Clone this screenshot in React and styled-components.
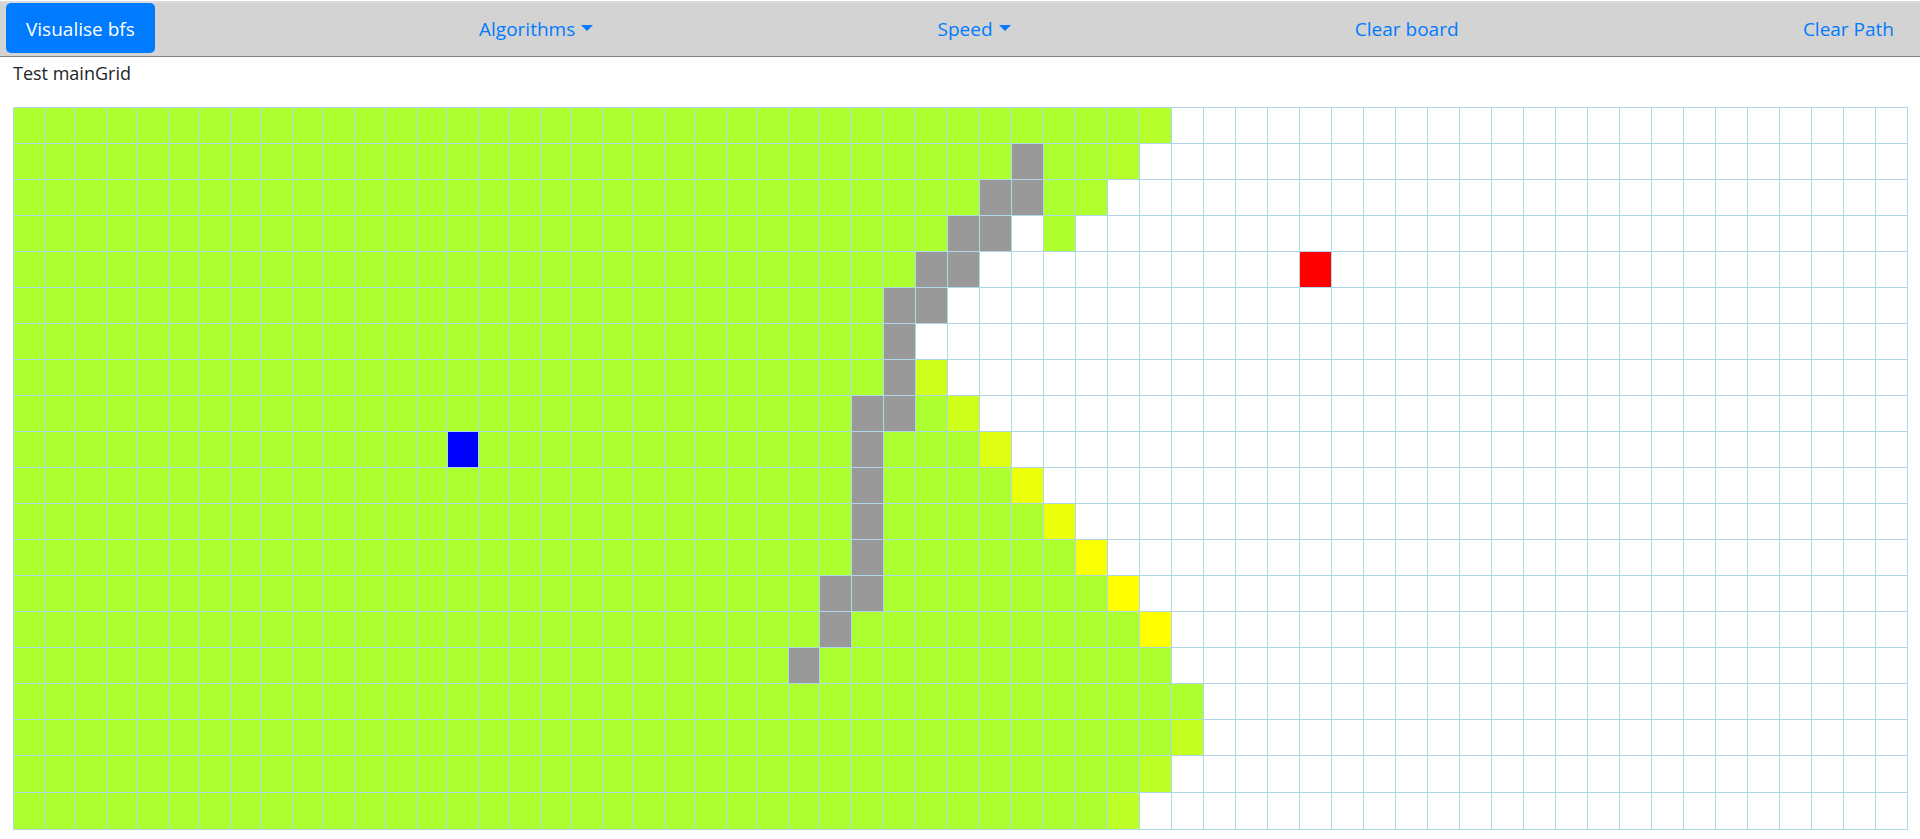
import React from 'react';
import styled, { createGlobalStyle } from 'styled-components';

const GlobalStyle = createGlobalStyle`
  *, *::before, *::after { box-sizing: border-box; }
  body {
    margin: 0;
    background: #fff;
    color: #212529;
    font-family: 'Segoe UI', 'Open Sans', 'Noto Sans', sans-serif;
    font-size: 18px;
    line-height: 30px;
  }
`;

const Page = styled.div`
  padding-top: 1px;
`;

const Toolbar = styled.nav`
  display: flex;
  justify-content: space-between;
  height: 56px;
  padding: 0 6px 3px;
  border-top: 2px solid #dadae0;
  border-bottom: 1px solid #808080;
  background: #d3d3d3;
`;

const ToolButton = styled.button`
  display: flex;
  align-items: center;
  gap: 6px;
  height: 50px;
  padding: 2px 20px 0;
  border: 0;
  border-radius: 5px;
  background: ${({ $primary }) => ($primary ? '#007bff' : 'transparent')};
  color: ${({ $primary }) => ($primary ? '#fff' : '#007bff')};
  font: inherit;
  font-size: 19px;
  cursor: pointer;
`;

const Caret = styled.span`
  border-top: 6px solid currentColor;
  border-right: 6px solid transparent;
  border-left: 6px solid transparent;
  margin-bottom: 2px;
`;

const Main = styled.main`
  padding: 1px 12px 0 13px;
`;

const Caption = styled.p`
  margin: 0 0 19px;
`;

const Board = styled.table`
  width: 100%;
  height: calc(100vh - 116px);
  border-collapse: collapse;
  table-layout: fixed;
`;

const NarrowColumn = styled.col`
  width: 31px;
`;

const BoardRow = styled.tr`
  height: ${({ $flexible }) => ($flexible ? 'auto' : '36px')};
`;

const Cell = styled.td`
  padding: 0;
  border: 1px solid lightblue;
  background: ${({ $fill }) => $fill};
`;

const GREEN = '#adff2f';
const WALL = '#999999';
const COLUMNS = 60;
// The remaining columns and rows share whatever space the window leaves.
const NARROW_COLUMNS = 26;
const FIXED_ROWS = 18;

// For each row: last visited column, wall columns, unvisited gaps and
// the colour of cells that are still fading in.
const ROWS = [
  { last: 36, fading: { 36: '#b7ff2a' } },
  { last: 35, walls: [32], fading: { 35: '#b4ff2b' } },
  { last: 34, walls: [31, 32], fading: { 34: '#b1ff2d' } },
  { last: 33, walls: [30, 31], gaps: [32], fading: { 33: '#afff2e' } },
  { last: 28, walls: [29, 30] },
  { last: 27, walls: [28, 29] },
  { last: 27, walls: [28] },
  { last: 29, walls: [28], fading: { 29: '#d0ff1c' } },
  { last: 30, walls: [27, 28], fading: { 30: '#d0ff1c' } },
  { last: 31, walls: [27], fading: { 31: '#deff13' } },
  { last: 32, walls: [27], fading: { 32: '#ecff0b' } },
  { last: 33, walls: [27], fading: { 33: '#ecff0b' } },
  { last: 34, walls: [27], fading: { 34: '#faff03' } },
  { last: 35, walls: [26, 27], fading: { 35: '#ffff00' } },
  { last: 36, walls: [26], fading: { 36: '#ffff00' } },
  { last: 36, walls: [25] },
  { last: 37 },
  { last: 37, fading: { 37: '#c4ff22' } },
  { last: 36, fading: { 36: '#bdff27' } },
  { last: 35, fading: { 35: '#bdff27' } },
];

const START = { row: 9, column: 14 };
const TARGET = { row: 4, column: 41 };

const isAt = (node, row, column) => node.row === row && node.column === column;

function fillFor(row, column) {
  const { last, walls = [], gaps = [], fading = {} } = ROWS[row];
  if (isAt(START, row, column)) return '#0000ff';
  if (isAt(TARGET, row, column)) return '#ff0000';
  if (walls.includes(column)) return WALL;
  if (fading[column]) return fading[column];
  return column <= last && !gaps.includes(column) ? GREEN : '#ffffff';
}

export default function App() {
  return (
    <Page>
      <GlobalStyle />
      <Toolbar>
        <ToolButton type="button" $primary>Visualise bfs</ToolButton>
        <ToolButton type="button" aria-haspopup="menu">Algorithms<Caret /></ToolButton>
        <ToolButton type="button" aria-haspopup="menu">Speed<Caret /></ToolButton>
        <ToolButton type="button">Clear board</ToolButton>
        <ToolButton type="button">Clear Path</ToolButton>
      </Toolbar>
      <Main>
        <Caption id="board-title">Test mainGrid</Caption>
        <Board aria-labelledby="board-title">
          <colgroup>
            <NarrowColumn span={NARROW_COLUMNS} />
            <col span={COLUMNS - NARROW_COLUMNS} />
          </colgroup>
          <tbody>
            {ROWS.map((_, row) => (
              <BoardRow key={row} $flexible={row >= FIXED_ROWS}>
                {Array.from({ length: COLUMNS }, (__, column) => (
                  <Cell key={column} $fill={fillFor(row, column)} />
                ))}
              </BoardRow>
            ))}
          </tbody>
        </Board>
      </Main>
    </Page>
  );
}
